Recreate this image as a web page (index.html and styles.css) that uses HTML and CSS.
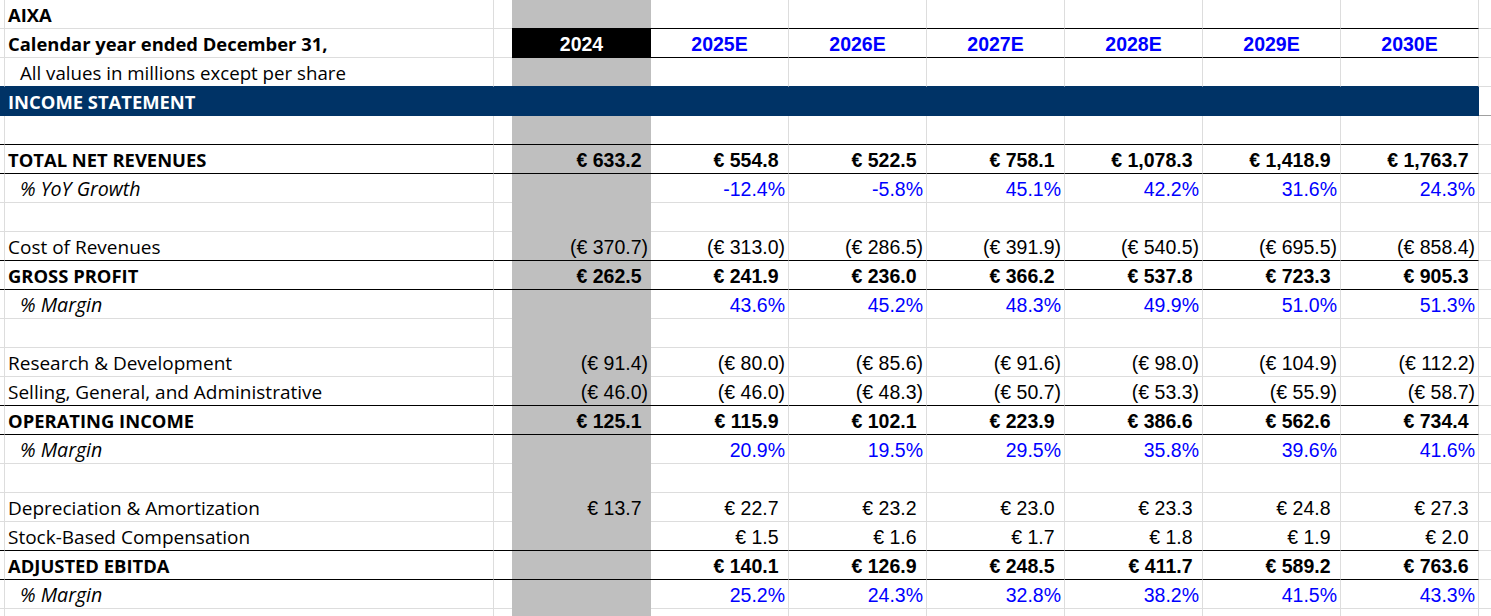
FILE: index.html
```html
<!DOCTYPE html>
<html lang="en">
<head>
<meta charset="utf-8">
<title>AIXA Income Statement</title>
<link rel="stylesheet" href="styles.css">
</head>
<body>
<div class="sheet">
  <div class="row hdr-top"><span></span><span class="b">AIXA</span><span></span><span></span><span></span><span></span><span></span><span></span><span></span><span></span><span></span></div>
  <div class="row hdr"><span></span><span class="b">Calendar year ended December 31,</span><span></span><span class="yr">2024</span><span class="yr">2025E</span><span class="yr">2026E</span><span class="yr">2027E</span><span class="yr">2028E</span><span class="yr">2029E</span><span class="yr">2030E</span><span></span></div>
  <div class="row above-band"><span></span><span class="ind">All values in millions except per share</span><span></span><span></span><span></span><span></span><span></span><span></span><span></span><span></span><span></span></div>
  <div class="row band"><span></span><span class="b">INCOME STATEMENT</span><span></span><span></span><span></span><span></span><span></span><span></span><span></span><span></span><span></span></div>
  <div class="row ruled"><span></span><span></span><span></span><span></span><span></span><span></span><span></span><span></span><span></span><span></span><span></span></div>
  <div class="row ruled tot"><span></span><span>TOTAL NET REVENUES</span><span></span><span class="p">€ 633.2</span><span class="p">€ 554.8</span><span class="p">€ 522.5</span><span class="p">€ 758.1</span><span class="p">€ 1,078.3</span><span class="p">€ 1,418.9</span><span class="p">€ 1,763.7</span><span></span></div>
  <div class="row pct"><span></span><span class="i">% YoY Growth</span><span></span><span></span><span>-12.4%</span><span>-5.8%</span><span>45.1%</span><span>42.2%</span><span>31.6%</span><span>24.3%</span><span></span></div>
  <div class="row"><span></span><span></span><span></span><span></span><span></span><span></span><span></span><span></span><span></span><span></span><span></span></div>
  <div class="row ruled"><span></span><span>Cost of Revenues</span><span></span><span>(€ 370.7)</span><span>(€ 313.0)</span><span>(€ 286.5)</span><span>(€ 391.9)</span><span>(€ 540.5)</span><span>(€ 695.5)</span><span>(€ 858.4)</span><span></span></div>
  <div class="row ruled tot"><span></span><span>GROSS PROFIT</span><span></span><span class="p">€ 262.5</span><span class="p">€ 241.9</span><span class="p">€ 236.0</span><span class="p">€ 366.2</span><span class="p">€ 537.8</span><span class="p">€ 723.3</span><span class="p">€ 905.3</span><span></span></div>
  <div class="row pct"><span></span><span class="i">% Margin</span><span></span><span></span><span>43.6%</span><span>45.2%</span><span>48.3%</span><span>49.9%</span><span>51.0%</span><span>51.3%</span><span></span></div>
  <div class="row"><span></span><span></span><span></span><span></span><span></span><span></span><span></span><span></span><span></span><span></span><span></span></div>
  <div class="row"><span></span><span>Research &amp; Development</span><span></span><span>(€ 91.4)</span><span>(€ 80.0)</span><span>(€ 85.6)</span><span>(€ 91.6)</span><span>(€ 98.0)</span><span>(€ 104.9)</span><span>(€ 112.2)</span><span></span></div>
  <div class="row ruled"><span></span><span>Selling, General, and Administrative</span><span></span><span>(€ 46.0)</span><span>(€ 46.0)</span><span>(€ 48.3)</span><span>(€ 50.7)</span><span>(€ 53.3)</span><span>(€ 55.9)</span><span>(€ 58.7)</span><span></span></div>
  <div class="row ruled tot"><span></span><span>OPERATING INCOME</span><span></span><span class="p">€ 125.1</span><span class="p">€ 115.9</span><span class="p">€ 102.1</span><span class="p">€ 223.9</span><span class="p">€ 386.6</span><span class="p">€ 562.6</span><span class="p">€ 734.4</span><span></span></div>
  <div class="row pct"><span></span><span class="i">% Margin</span><span></span><span></span><span>20.9%</span><span>19.5%</span><span>29.5%</span><span>35.8%</span><span>39.6%</span><span>41.6%</span><span></span></div>
  <div class="row"><span></span><span></span><span></span><span></span><span></span><span></span><span></span><span></span><span></span><span></span><span></span></div>
  <div class="row"><span></span><span>Depreciation &amp; Amortization</span><span></span><span class="p">€ 13.7</span><span class="p">€ 22.7</span><span class="p">€ 23.2</span><span class="p">€ 23.0</span><span class="p">€ 23.3</span><span class="p">€ 24.8</span><span class="p">€ 27.3</span><span></span></div>
  <div class="row ruled"><span></span><span>Stock-Based Compensation</span><span></span><span></span><span class="p">€ 1.5</span><span class="p">€ 1.6</span><span class="p">€ 1.7</span><span class="p">€ 1.8</span><span class="p">€ 1.9</span><span class="p">€ 2.0</span><span></span></div>
  <div class="row ruled tot"><span></span><span>ADJUSTED EBITDA</span><span></span><span></span><span class="p">€ 140.1</span><span class="p">€ 126.9</span><span class="p">€ 248.5</span><span class="p">€ 411.7</span><span class="p">€ 589.2</span><span class="p">€ 763.6</span><span></span></div>
  <div class="row pct"><span></span><span class="i">% Margin</span><span></span><span></span><span>25.2%</span><span>24.3%</span><span>32.8%</span><span>38.2%</span><span>41.5%</span><span>43.3%</span><span></span></div>
  <div class="row"><span></span><span></span><span></span><span></span><span></span><span></span><span></span><span></span><span></span><span></span><span></span></div>
</div>
</body>
</html>
```
FILE: styles.css
```css
* {
  box-sizing: border-box;
}

html, body {
  margin: 0;
  padding: 0;
  background: #ffffff;
  overflow: hidden;
}

.sheet {
  width: 1491px;
}

.row {
  display: grid;
  grid-template-columns: 5px 489px 18px 139px repeat(6, 138px) 1fr;
}

.row > span {
  display: block;
  height: 29px;
  padding: 2px 3px 0 3px;
  border-right: 1px solid #dddddd;
  border-bottom: 1px solid #dddddd;
  font-family: "Liberation Sans", Arial, sans-serif;
  font-size: 19.5px;
  line-height: 26px;
  font-weight: 400;
  color: #000000;
  text-align: right;
  white-space: nowrap;
  overflow: visible;
}

/* column A: narrow spacer */
.row > span:nth-child(1) {
  padding: 0;
}

/* column B: labels */
.row > span:nth-child(2) {
  font-family: "Open Sans", "Noto Sans", sans-serif;
  font-size: 19px;
  font-weight: 500;
  text-align: left;
}

/* column C: narrow spacer */
.row > span:nth-child(3) {
  border-right: 0;
  padding: 0;
}

/* column D: historical year, shaded */
.row > span:nth-child(4) {
  background: #bfbfbf;
  border-right: 0;
  border-bottom-color: #bfbfbf;
}

/* column K: trailing column */
.row > span:nth-child(11) {
  border-right: 0;
}

.row > span.b,
.tot > span:nth-child(2) {
  font-weight: 700;
  font-size: 18.4px;
}

.row > span.ind {
  font-size: 18.7px;
  padding-left: 15px;
}

.row > span.i {
  font-style: italic;
  font-size: 19.6px;
  padding-left: 15px;
}

/* positive accounting numbers reserve room for a closing parenthesis */
.row > span.p {
  padding-right: calc(3px + 0.333em);
}

/* header rows */
.hdr-top > span:nth-child(n+4):nth-child(-n+10) {
  border-bottom-color: #000000;
}

.hdr > span:nth-child(n+4):nth-child(-n+10) {
  border-bottom-color: #000000;
}

.row > span.yr {
  font-weight: 700;
  text-align: center;
  color: #0000ff;
}

.hdr > span.yr:nth-child(4) {
  background: #000000;
  color: #ffffff;
}

/* navy section band */
.above-band > span:nth-child(-n+10) {
  border-bottom-color: #003366;
}

.band > span:nth-child(-n+10) {
  background: #003366;
  border-right-color: #003366;
  border-bottom-color: #003366;
  color: #ffffff;
}

.band > span:nth-child(11) {
  border-bottom-color: #a0a0a0;
}

/* rows with a black rule underneath */
.ruled > span:nth-child(-n+10) {
  border-bottom-color: #000000;
}

.tot > span {
  font-weight: 700;
}

.pct > span:nth-child(n+4) {
  color: #0000ff;
}
```
